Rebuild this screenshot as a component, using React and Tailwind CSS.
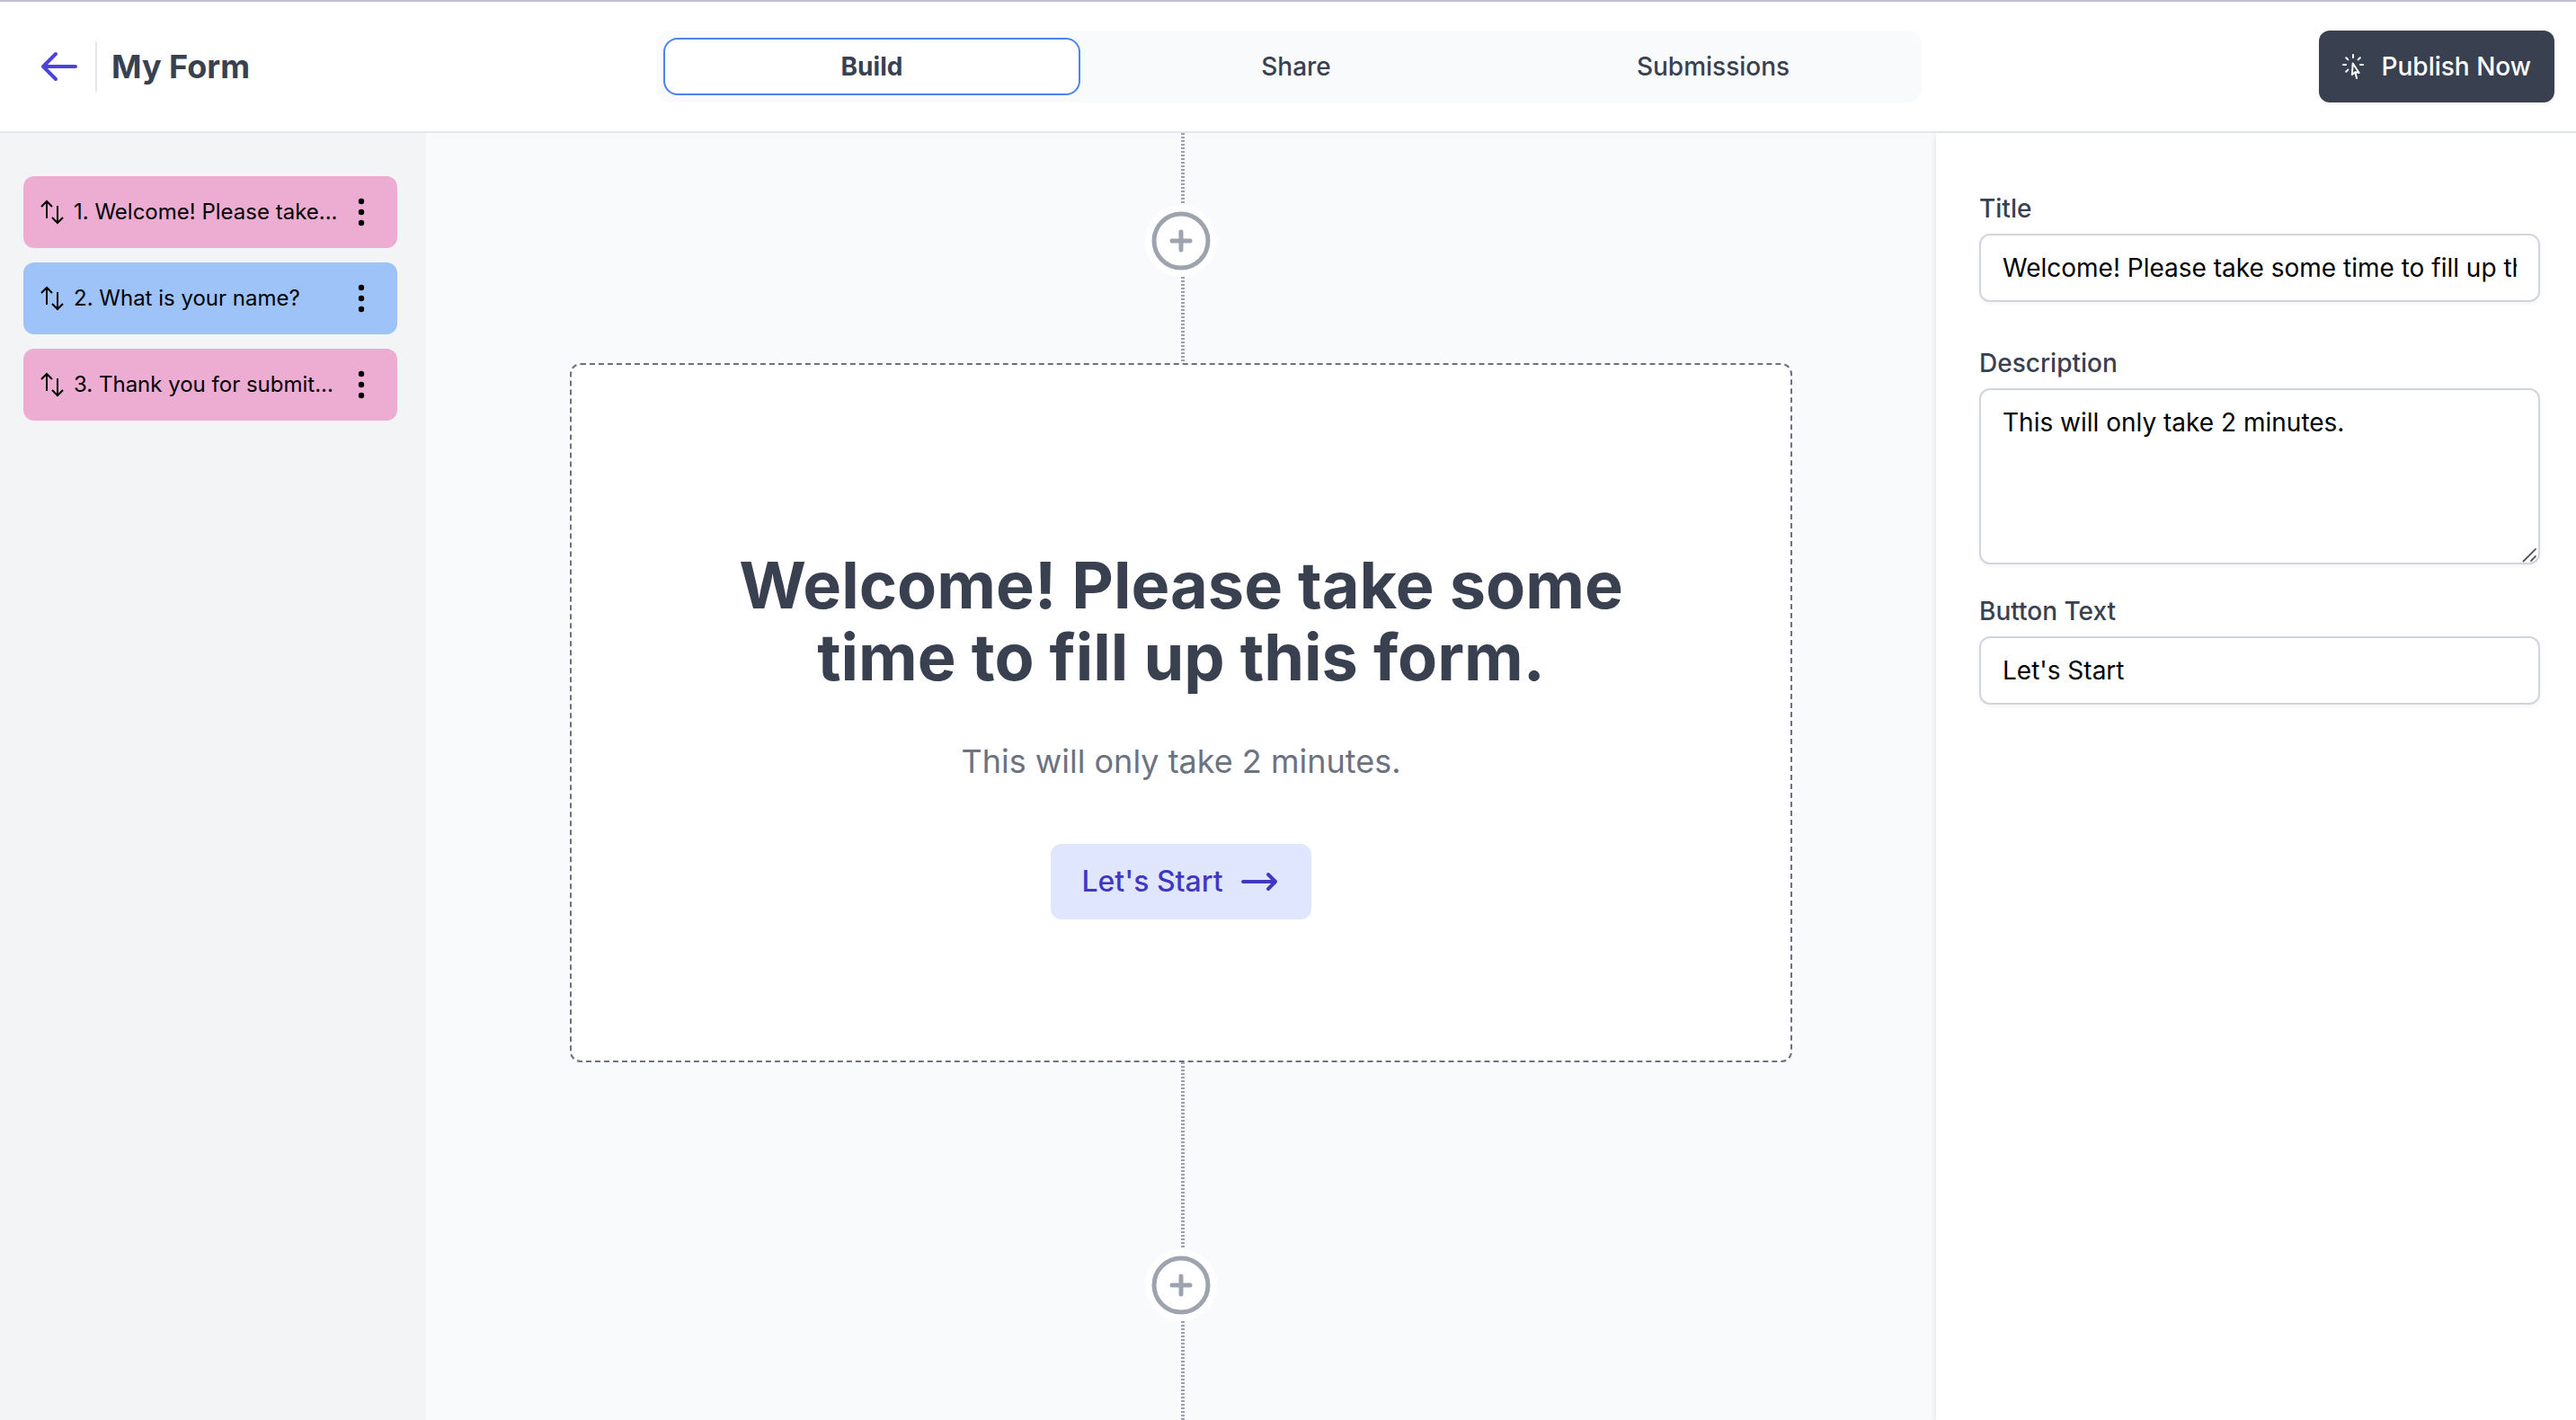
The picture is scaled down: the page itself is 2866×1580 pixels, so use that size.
import { useState } from "react";

function BackIcon() {
  return (
    <svg className="size-12" viewBox="0 0 24 24" fill="none" stroke="currentColor" strokeWidth="2" strokeLinecap="round" strokeLinejoin="round" aria-hidden="true">
      <path d="M10 19l-7-7m0 0l7-7m-7 7h18" />
    </svg>
  );
}

function ArrowRightIcon() {
  return (
    <svg className="size-12" viewBox="0 0 24 24" fill="none" stroke="currentColor" strokeWidth="2" strokeLinecap="round" strokeLinejoin="round" aria-hidden="true">
      <path d="M17 8l4 4m0 0l-4 4m4-4H3" />
    </svg>
  );
}

function CursorRaysIcon() {
  return (
    <svg className="size-8" viewBox="0 0 24 24" fill="none" stroke="currentColor" strokeWidth="1.5" strokeLinecap="round" strokeLinejoin="round" aria-hidden="true">
      <path d="M15.042 21.672L13.684 16.6m0 0l-2.51 2.225.569-9.47 5.227 7.917-3.286-.672zM12 2.25V4.5m5.834.166l-1.591 1.591M20.25 10.5H18M7.757 14.743l-1.59 1.59M6 10.5H3.75m4.007-4.243l-1.59-1.59" />
    </svg>
  );
}

function PlusCircleIcon() {
  return (
    <svg className="size-20" viewBox="0 0 24 24" fill="none" stroke="currentColor" strokeWidth="1.5" strokeLinecap="round" strokeLinejoin="round" aria-hidden="true">
      <path d="M12 9v6m3-3H9m12 0a9 9 0 11-18 0 9 9 0 0118 0z" />
    </svg>
  );
}

function ReorderIcon() {
  return (
    <svg className="size-8 shrink-0" viewBox="0 0 32 32" fill="none" stroke="currentColor" strokeWidth="2" aria-hidden="true">
      <path d="M10 23V4M4 10l6-6 6 6M22 9v19M16 22l6 6 6-6" />
    </svg>
  );
}

function DotsIcon() {
  return (
    <svg className="size-12" viewBox="0 0 24 24" fill="currentColor" aria-hidden="true">
      <circle cx="12" cy="6" r="1.6" />
      <circle cx="12" cy="12" r="1.6" />
      <circle cx="12" cy="18" r="1.6" />
    </svg>
  );
}

const steps = [
  { label: "1. Welcome! Please take...", color: "bg-[#edacd2]" },
  { label: "2. What is your name?", color: "bg-[#9dc3f8]" },
  { label: "3. Thank you for submit...", color: "bg-[#edacd2]" },
];

function Connector({ className }) {
  return (
    <div
      className={`ml-1 w-1 bg-[repeating-linear-gradient(to_bottom,#9ca3af_0px,#9ca3af_2px,transparent_2px,transparent_4px)] ${className}`}
    />
  );
}

function AddButton() {
  return (
    <button type="button" aria-label="Add step" className="size-20 shrink-0 rounded-full bg-white text-[#9da3af]">
      <PlusCircleIcon />
    </button>
  );
}

const fieldClass =
  "block w-full rounded-xl border-2 border-[#d2d5dc] bg-white px-6 text-[28px] leading-10 text-black shadow-[0_2px_4px_rgba(0,0,0,0.05)] outline-none";

const tabClass = "h-16 flex-1 rounded-2xl border-2";

export default function App() {
  const [title, setTitle] = useState("Welcome! Please take some time to fill up this form.");
  const [description, setDescription] = useState("This will only take 2 minutes.");
  const [buttonText, setButtonText] = useState("Let's Start");

  return (
    <div className="flex h-screen flex-col overflow-hidden border-t-2 border-[#c5c1d5] bg-white font-['Inter',sans-serif] text-[#394150]">
      <header className="grid grid-cols-[1fr_2fr_1fr] items-center border-b-2 border-[#e3e8ef] py-8 pr-6 pl-[26px]">
        <div className="flex items-center pl-4">
          <a href="#forms" aria-label="Back" className="text-[#4c43dd]">
            <BackIcon />
          </a>
          <div className="ml-4 h-14 w-0.5 bg-[#e5e7eb]" />
          <h1 className="ml-4 text-[36px] leading-[56px] font-bold">My Form</h1>
        </div>
        <nav className="flex rounded-2xl bg-[#f8fafc] py-2 pl-2 text-[28px] leading-10 font-medium">
          <button type="button" className={`mr-2 border-[#4c83ee] bg-white font-bold ${tabClass}`}>Build</button>
          <button type="button" className={`border-transparent ${tabClass}`}>Share</button>
          <button type="button" className={`border-transparent ${tabClass}`}>Submissions</button>
        </nav>
        <button type="button" className="flex h-20 items-center gap-4 justify-self-end rounded-xl bg-[#394150] pr-[26px] pl-[22px] text-[28px] leading-10 font-medium text-white shadow-[0_2px_4px_rgba(0,0,0,0.05)]">
          <CursorRaysIcon />
          Publish Now
        </button>
      </header>

      <div className="flex min-h-0 flex-1">
        <aside className="w-[474px] shrink-0 bg-[#f3f4f6] pt-12 pr-8 pl-[26px]">
          <ul className="flex flex-col gap-4">
            {steps.map((s) => (
              <li key={s.label} className={`flex h-20 items-center rounded-xl px-4 text-[24px] leading-8 text-black ${s.color}`}>
                <ReorderIcon />
                <span className="ml-2 flex-1 whitespace-nowrap">{s.label}</span>
                <button type="button" aria-label="Step options">
                  <DotsIcon />
                </button>
              </li>
            ))}
          </ul>
        </aside>

        <main className="flex min-w-0 flex-1 flex-col items-center bg-[#f9fafc] px-40">
          <Connector className="h-20 shrink-0" />
          <AddButton />
          <Connector className="h-24 shrink-0" />
          <section className="flex w-full shrink-0 flex-col items-center rounded-xl border-2 border-dashed border-[#6c7280] bg-white px-40 pt-[205px] pb-[157px] text-center">
            <h2 className="max-w-[1040px] text-[72px] leading-[80px] font-bold">Welcome! Please take some time to fill up this form.</h2>
            <p className="mt-12 text-[36px] leading-[56px] text-[#6c7280]">{description}</p>
            <button type="button" className="mt-16 flex h-[84px] items-center gap-4 rounded-xl bg-[#e0e6fd] px-[34px] text-[32px] leading-10 font-medium text-[#4138c2]">
              {buttonText}
              <ArrowRightIcon />
            </button>
          </section>
          <Connector className="h-52 shrink-0" />
          <AddButton />
          <Connector className="flex-1" />
        </main>

        <aside className="w-[712px] shrink-0 bg-white pt-16 pr-10 pl-12 shadow-[0_4px_8px_rgba(0,0,0,0.12)]">
          <label htmlFor="title" className="block text-[28px] leading-10 font-medium">Title</label>
          <input id="title" type="text" value={title} onChange={(e) => setTitle(e.target.value)} className={`mt-2 mb-12 h-[76px] ${fieldClass}`} />
          <label htmlFor="description" className="block text-[28px] leading-10 font-medium">Description</label>
          <div className="relative mt-2 mb-8">
            <textarea id="description" value={description} onChange={(e) => setDescription(e.target.value)} className={`h-[196px] resize-none py-4 ${fieldClass}`} />
            <svg className="pointer-events-none absolute right-1 bottom-0.5 size-4" viewBox="0 0 16 16" fill="none" stroke="#555" strokeWidth="1.8" aria-hidden="true">
              <path d="M1 15L15.5 .5M9.500 14.500L15.500 8.500" />
            </svg>
          </div>
          <label htmlFor="button-text" className="block text-[28px] leading-10 font-medium">Button Text</label>
          <input id="button-text" type="text" value={buttonText} onChange={(e) => setButtonText(e.target.value)} className={`mt-2 h-[76px] ${fieldClass}`} />
        </aside>
      </div>
    </div>
  );
}
